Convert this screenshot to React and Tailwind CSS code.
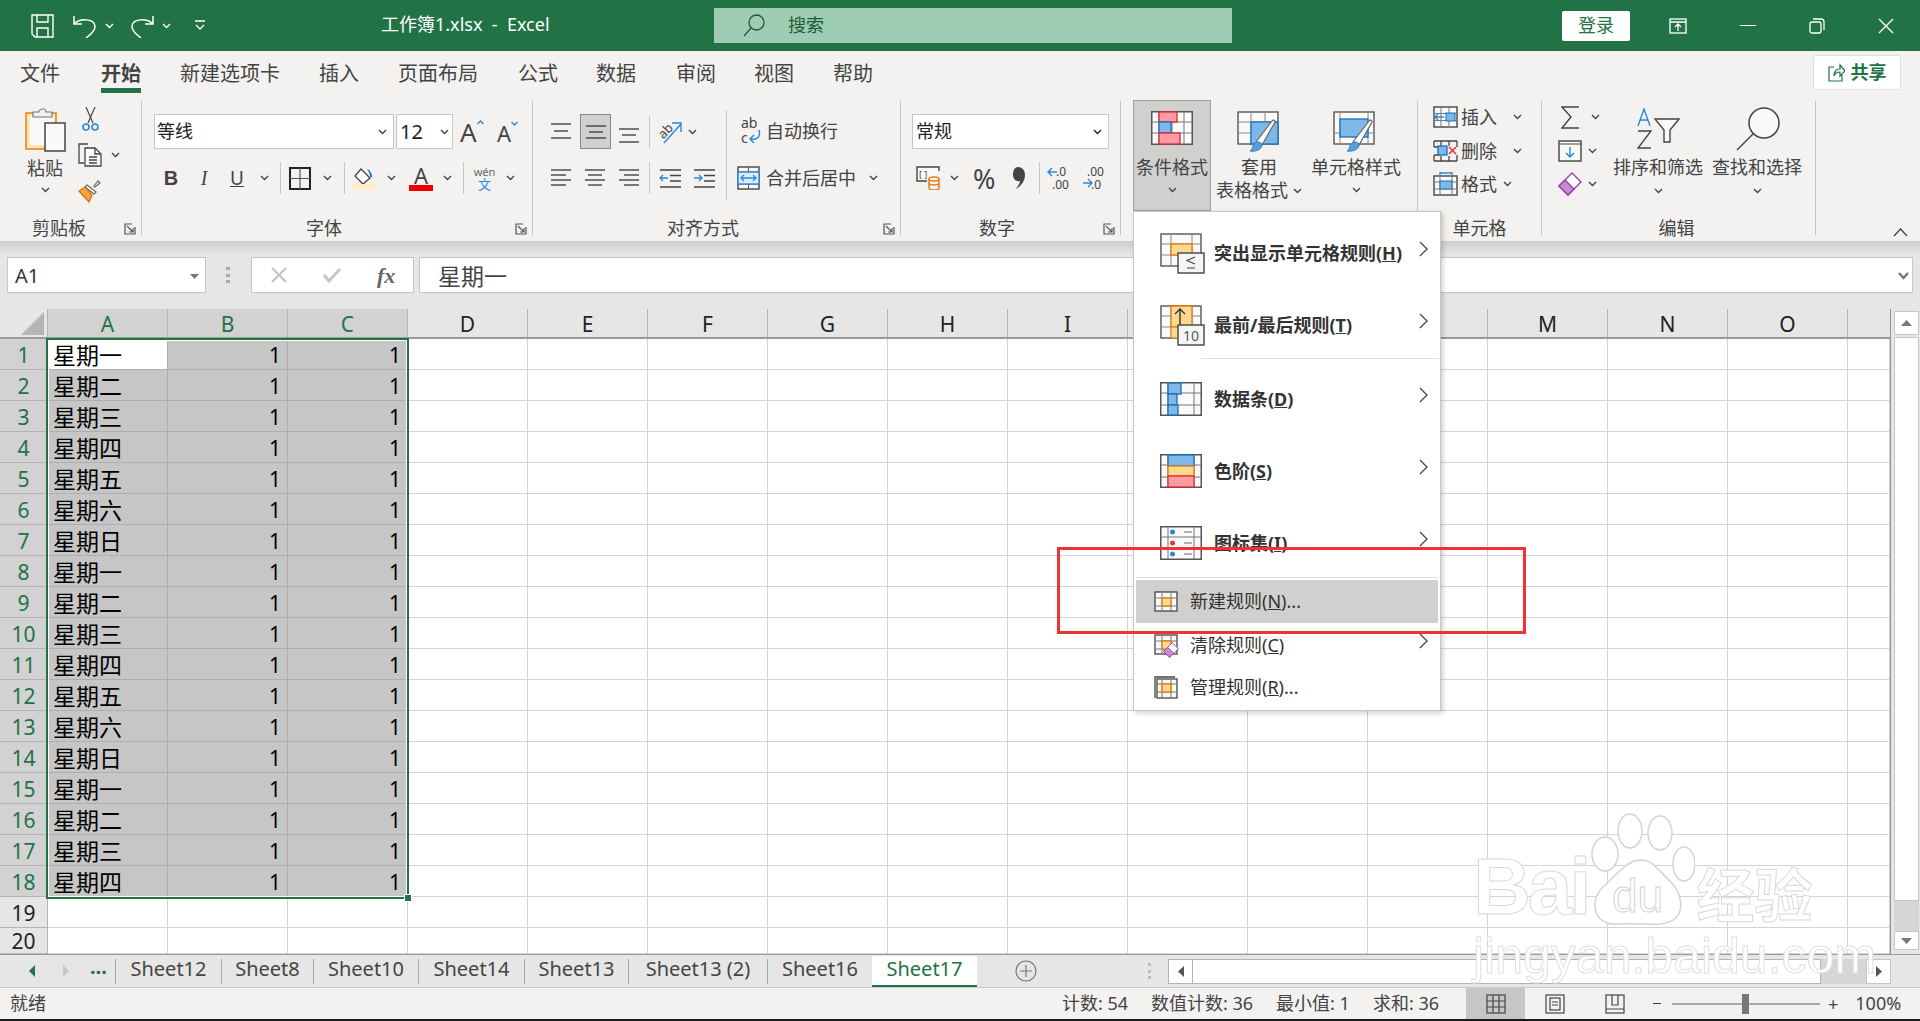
import React from "react";

const COLS = ["A", "B", "C", "D", "E", "F", "G", "H", "I", "J", "K", "L", "M", "N", "O", ""];
const DAYS = ["星期一", "星期二", "星期三", "星期四", "星期五", "星期六", "星期日", "星期一", "星期二", "星期三", "星期四", "星期五", "星期六", "星期日", "星期一", "星期二", "星期三", "星期四"];
const TABS = [
  { label: "文件", className: "ml-[20px]" },
  { label: "开始", className: "ml-[41px]", active: true },
  { label: "新建选项卡", className: "ml-[39px]" },
  { label: "插入", className: "ml-[39px]" },
  { label: "页面布局", className: "ml-[39px]" },
  { label: "公式", className: "ml-[40px]" },
  { label: "数据", className: "ml-[38px]" },
  { label: "审阅", className: "ml-[40px]" },
  { label: "视图", className: "ml-[38px]" },
  { label: "帮助", className: "ml-[39px]" },
];
const SHEETS = [
  { name: "Sheet12", className: "w-[106px]" },
  { name: "Sheet8", className: "w-[92px]" },
  { name: "Sheet10", className: "w-[105px]" },
  { name: "Sheet14", className: "w-[106px]" },
  { name: "Sheet13", className: "w-[104px]" },
  { name: "Sheet13 (2)", className: "w-[139px]" },
  { name: "Sheet16", className: "w-[105px]" },
];

function Chev({ className = "", color = "#444" }) {
  return (
    <svg className={`shrink-0 ${className}`} width="9" height="6" viewBox="0 0 9 6" fill="none">
      <path d="M1 1l3.5 3.5L8 1" stroke={color} strokeWidth="1.4" />
    </svg>
  );
}

function Launcher({ className = "" }) {
  return (
    <svg className={className} width="12" height="12" viewBox="0 0 12 12" fill="none" stroke="#555" strokeWidth="1.2">
      <path d="M11 4V11H1V1h7" />
      <path d="M3 3l6 6M9 5v4H5" />
    </svg>
  );
}

function VDiv({ className = "h-[32px]" }) {
  return <div className={`w-px bg-[#c8c6c4] shrink-0 ${className}`} />;
}

function Lines({ w = 21, rows, color = "#444" }) {
  return (
    <svg width={w} height="22" viewBox={`0 0 ${w} 22`} stroke={color} strokeWidth="1.4" fill="none">
      {rows.map(([x1, x2, y], i) => <path key={i} d={`M${x1} ${y}H${x2}`} />)}
    </svg>
  );
}

function Brush({ x = 0, y = 0 }) {
  return (
    <g transform={`translate(${x} ${y})`}>
      <path d="M8 24L24 3c1-1.500 3-1 3 1L14 27z" fill="#fff" stroke="#666" strokeWidth="1.2" />
      <path d="M2 33c3-1 2-6 5-8 3-2 7-1 7 2 0 4-6 7-12 6z" fill="#5a9fd8" stroke="#2f7fc1" strokeWidth="1" />
    </g>
  );
}

function MiniGrid({ w = 44, h = 34, xs = [], ys = [], children }) {
  return (
    <svg width={w} height={h} viewBox={`0 0 ${w} ${h}`} className="shrink-0">
      <rect x="0.75" y="0.75" width={w - 1.5} height={h - 1.5} fill="#fafafa" stroke="#555" strokeWidth="1.5" />
      {xs.map((x) => <path key={x} d={`M${x} 1V${h - 1}`} stroke="#777" strokeWidth="1" />)}
      {ys.map((y) => <path key={y} d={`M1 ${y}H${w - 1}`} stroke="#777" strokeWidth="1" />)}
      {children}
    </svg>
  );
}

function PasteIcon() {
  return (
    <svg width="41" height="45" viewBox="0 0 41 45">
      <rect x="1" y="6" width="30" height="36" fill="#fde6b3" stroke="#e08a1e" strokeWidth="1.6" />
      <rect x="5" y="9" width="24" height="29" fill="#f8f8f8" />
      <path d="M8 10V5h6c0-4 7-4 7 0h6v5z" fill="#f2f2f2" stroke="#777" strokeWidth="1.2" />
      <rect x="20" y="16" width="20" height="28" fill="#fafafa" stroke="#444" strokeWidth="1.5" />
    </svg>
  );
}

function CutIcon() {
  return (
    <svg width="17" height="24" viewBox="0 0 17 24" fill="none">
      <path d="M4 0l7 16M13 0L6 16" stroke="#444" strokeWidth="1.2" />
      <circle cx="4" cy="20" r="3" stroke="#2b88d8" strokeWidth="1.6" />
      <circle cx="13" cy="20" r="3" stroke="#2b88d8" strokeWidth="1.6" />
    </svg>
  );
}

function CopyIcon() {
  return (
    <svg width="24" height="24" viewBox="0 0 24 24" fill="none" stroke="#444" strokeWidth="1.3">
      <path d="M10 1H1v19h5" />
      <path d="M7 5h10l6 6v12H7z" fill="#fafafa" />
      <path d="M17 5v6h6M11 14h8M11 17h8M11 20h8" />
    </svg>
  );
}

function PainterIcon() {
  return (
    <svg width="24" height="24" viewBox="0 0 24 24">
      <path d="M16 7l4-5 2 2-5 4z" fill="#fff" stroke="#666" strokeWidth="1.2" />
      <path d="M9 6l9 7-2 2-9-7z" fill="#fff" stroke="#666" strokeWidth="1.2" />
      <path d="M7 8l7 8-3 7L1 12z" fill="#f4a340" stroke="#d9730d" strokeWidth="1.3" />
    </svg>
  );
}

function BorderIcon() {
  return (
    <svg width="22" height="23" viewBox="0 0 22 23" fill="none">
      <rect x="1" y="1" width="20" height="21" stroke="#222" strokeWidth="2" />
      <path d="M11 1v21M1 11.500h20" stroke="#555" strokeWidth="1.2" />
    </svg>
  );
}

function FillIcon() {
  return (
    <svg width="24" height="24" viewBox="0 0 24 24">
      <path d="M9 3l9 9-7 6-8-8z" fill="#fff" stroke="#444" strokeWidth="1.3" />
      <path d="M15 3c3 1 5 4 5 8-1 1-2 0-2-1 0-3-2-5-3-7z" fill="#1b6ec2" />
      <rect y="18" width="24" height="6" fill="#ffeec6" />
    </svg>
  );
}

function WrapIcon() {
  return (
    <svg width="20" height="32" viewBox="0 0 20 32" fill="none">
      <text x="0" y="12" fontSize="14" fill="#444">ab</text>
      <text x="0" y="27" fontSize="14" fill="#444">c</text>
      <path d="M18 14c2 7-2 10-8 9M13 19l-4 4 4 4" stroke="#2b88d8" strokeWidth="1.5" />
    </svg>
  );
}

function MergeIcon() {
  return (
    <svg width="23" height="24" viewBox="0 0 23 24" fill="none">
      <rect x="1" y="1" width="21" height="22" fill="#fafafa" stroke="#444" strokeWidth="1.4" />
      <path d="M1 6h21M1 18h21M11.500 1v5M11.500 18v5" stroke="#555" />
      <rect x="1" y="6" width="21" height="12" fill="#dcecf9" stroke="#2b88d8" strokeWidth="1.4" />
      <path d="M4 12h15M7 9l-3 3 3 3M16 9l3 3-3 3" stroke="#2b88d8" strokeWidth="1.3" />
    </svg>
  );
}

function OrientIcon() {
  return (
    <svg width="25" height="26" viewBox="0 0 25 26" fill="none">
      <text x="0" y="16" fontSize="13" fill="#444" transform="rotate(-45 8 12)">ab</text>
      <path d="M6 24L23 5M14 4h9v9" stroke="#2b88d8" strokeWidth="1.4" />
    </svg>
  );
}

function IndentIcon({ flip }) {
  return (
    <svg width="22" height="22" viewBox="0 0 22 22" fill="none">
      <path d="M1 3h21M11 8.500h11M11 14h11M1 20h21" stroke="#444" strokeWidth="1.4" />
      {flip ? <path d="M1 11h8M6 8l3 3-3 3" stroke="#2b88d8" strokeWidth="1.4" /> : <path d="M1 11h8M4 8l-3 3 3 3" stroke="#2b88d8" strokeWidth="1.4" />}
    </svg>
  );
}

function CurrencyIcon() {
  return (
    <svg width="24" height="24" viewBox="0 0 24 24" fill="none">
      <path d="M23 5V1H1v14h10" fill="#fafafa" stroke="#444" strokeWidth="1.4" />
      <text x="3" y="12" fontSize="9" fill="#444">[ ]</text>
      <ellipse cx="18" cy="13" rx="5" ry="2" stroke="#e07a10" strokeWidth="1.4" />
      <path d="M13 13v9c0 2.600 10 2.600 10 0v-9M13 17c0 2.600 10 2.600 10 0" stroke="#e07a10" strokeWidth="1.4" />
    </svg>
  );
}

function DecimalIcon({ inc }) {
  return (
    <svg width="23" height="26" viewBox="0 0 23 26" fill="none">
      <text x={inc ? 9 : 5} y="11" fontSize="12" fill="#444">{inc ? ".0" : ".00"}</text>
      <text x={inc ? 5 : 9} y="24" fontSize="12" fill="#444">{inc ? ".00" : ".0"}</text>
      {inc ? <path d="M10 7H1M5 3L1 7l4 4" stroke="#2b88d8" strokeWidth="1.4" /> : <path d="M1 18h9M6 14l4 4-4 4" stroke="#2b88d8" strokeWidth="1.4" />}
    </svg>
  );
}

function InsertIcon() {
  return (
    <svg width="25" height="22" viewBox="0 0 25 22" fill="none">
      <rect x="1" y="1" width="23" height="20" fill="#fafafa" stroke="#444" strokeWidth="1.4" />
      <path d="M8 1v20M16 1v20M1 7.500h23M1 14.500h23" stroke="#777" />
      <rect x="13" y="7" width="9" height="8" fill="#7fb8e8" stroke="#1a6fb8" />
      <path d="M11 11H2M5 8l-3 3 3 3" stroke="#2b88d8" strokeWidth="1.4" />
    </svg>
  );
}

function DeleteIcon() {
  return (
    <svg width="25" height="22" viewBox="0 0 25 22" fill="none">
      <path d="M1 1h23M1 21h23M1 1v6M1 15v6M24 1v6M24 15v6M8 1v5M16 1v5M8 16v5M16 16v5M1 7h6M1 15h6" stroke="#444" strokeWidth="1.3" />
      <rect x="5" y="6" width="9" height="9" fill="#7fb8e8" stroke="#1a6fb8" strokeWidth="1.3" />
      <path d="M16 7l7 7M23 7l-7 7" stroke="#e63a3a" strokeWidth="1.6" />
    </svg>
  );
}

function FormatIcon() {
  return (
    <svg width="25" height="24" viewBox="0 0 25 24" fill="none">
      <path d="M7 1h12M7 0v3M19 0v3" stroke="#2b88d8" strokeWidth="1.3" />
      <rect x="1" y="4" width="23" height="19" fill="#fafafa" stroke="#444" strokeWidth="1.4" />
      <path d="M7 4v19M19 4v19M1 10h23M1 17h23" stroke="#777" />
      <rect x="7" y="9" width="12" height="8" fill="#7fb8e8" stroke="#1a6fb8" />
    </svg>
  );
}

function FillDownIcon() {
  return (
    <svg width="24" height="22" viewBox="0 0 24 22" fill="none">
      <rect x="1" y="1" width="22" height="20" fill="#fafafa" stroke="#444" strokeWidth="1.4" />
      <path d="M1 4h22" stroke="#444" />
      <path d="M12 7v10M8 13l4 4 4-4" stroke="#2b88d8" strokeWidth="1.4" />
    </svg>
  );
}

function EraserIcon({ size = 24 }) {
  return (
    <svg width={size} height={size} viewBox="0 0 24 24">
      <path d="M14 1l9 9-13 13-9-9z" fill="#fff" stroke="#9a3ea5" strokeWidth="1.4" />
      <path d="M7 8l9 9-6 6-9-9z" fill="#c98ad0" stroke="#9a3ea5" strokeWidth="1.4" />
    </svg>
  );
}

function SortIcon() {
  return (
    <svg width="43" height="41" viewBox="0 0 43 41" fill="none">
      <path d="M1 18L7 1l6 17M3 12h8" stroke="#2b88d8" strokeWidth="1.4" />
      <path d="M1 23h13L1 40h13" stroke="#444" strokeWidth="1.4" />
      <path d="M18 11h24l-9 11v12h-6V22z" fill="#fafafa" stroke="#444" strokeWidth="1.4" />
    </svg>
  );
}

function FindIcon() {
  return (
    <svg width="45" height="44" viewBox="0 0 45 44" fill="none">
      <circle cx="29" cy="16" r="15" fill="#fafafa" stroke="#444" strokeWidth="1.5" />
      <path d="M18 27L2 43" stroke="#444" strokeWidth="1.5" />
    </svg>
  );
}

function GridRow({ label, selected, active, day, value, height = "h-[31px]" }) {
  return (
    <div className={`flex ${height} shrink-0`}>
      <div className={`w-[48px] shrink-0 flex items-center justify-center pt-[3px] border-r border-b border-[#b4b4b4] text-[21px] ${selected ? "bg-[#d2d2d2] text-[#217346]" : "bg-[#e6e6e6] text-[#222]"}`}>
        {label}
      </div>
      {COLS.map((col, i) => {
        const inSel = selected && i < 3;
        const bg = inSel ? (active && i === 0 ? "bg-white" : "bg-[#c6c6c6]") : "bg-white";
        const border = inSel ? "border-[#aeaeae]" : "border-[#d4d4d4]";
        const width = i === 15 ? "w-[42px]" : "w-[120px]";
        return (
          <div key={i} className={`${width} shrink-0 border-r border-b ${bg} ${border} flex items-center pt-[3px] text-black overflow-hidden ${i === 0 ? "pl-[5px] text-[23px]" : "justify-end pr-[6px] text-[21px]"}`}>
            {inSel ? (i === 0 ? day : value) : ""}
          </div>
        );
      })}
    </div>
  );
}

function MenuIconOne() {
  return (
    <svg width="45" height="41" viewBox="0 0 45 41">
      <rect x="1" y="1" width="40" height="32" fill="#fafafa" stroke="#555" strokeWidth="1.4" />
      <path d="M11 1v32M32 1v32M1 11h40M1 22h40" stroke="#888" />
      <rect x="11" y="11" width="21" height="11" fill="#fbd98f" stroke="#e07a10" strokeWidth="1.3" />
      <rect x="18" y="20" width="26" height="20" fill="#f5f5f5" stroke="#444" strokeWidth="1.4" />
      <path d="M35 24l-8 3.500 8 3.500M27 35h8" stroke="#444" strokeWidth="1.2" fill="none" />
    </svg>
  );
}

function MenuIconTwo() {
  return (
    <svg width="45" height="41" viewBox="0 0 45 41">
      <rect x="1" y="1" width="40" height="32" fill="#fafafa" stroke="#555" strokeWidth="1.4" />
      <path d="M11 1v32M32 1v32M1 11h40M1 22h40" stroke="#888" />
      <path d="M11 1h21v21H11z" fill="#fbd98f" stroke="#e07a10" strokeWidth="1.3" />
      <path d="M11 22h8v11h-8z" fill="#fbd98f" stroke="#e07a10" />
      <path d="M20 20V4M15 9l5-5 5 5" stroke="#333" strokeWidth="1.4" fill="none" />
      <rect x="18" y="20" width="26" height="20" fill="#f5f5f5" stroke="#444" strokeWidth="1.4" />
      <text x="23" y="36" fontSize="14" fill="#555">10</text>
    </svg>
  );
}

function SmallRuleIcon({ manage }) {
  return (
    <svg width="24" height="23" viewBox="0 0 24 23">
      {manage && <path d="M1 22V1h20" fill="none" stroke="#444" strokeWidth="1.3" />}
      <rect x={manage ? 3 : 1} y={manage ? 3 : 2} width={manage ? 20 : 22} height={manage ? 19 : 19} fill="#fafafa" stroke="#444" strokeWidth="1.3" />
      <path d="M8 3v19M17 3v19M2 8h21M2 16h21" stroke="#777" />
      <rect x="8" y="8" width="9" height="8" fill="#fbd98f" stroke="#e07a10" strokeWidth="1.3" />
    </svg>
  );
}

function MenuItem({ icon, label, hot, tail = "", height, bold, arrow, className = "", highlight }) {
  return (
    <div className={`flex items-center shrink-0 ${height} ${className} ${highlight ? "mx-[2px] bg-[#d2d0ce]" : ""}`}>
      <div className={`shrink-0 flex items-center ${bold ? "ml-[26px] w-[54px]" : highlight ? "ml-[18px] w-[36px]" : "ml-[20px] w-[36px]"}`}>{icon}</div>
      <span className={`whitespace-nowrap text-[#333] ${bold ? "text-[18px] font-bold" : "text-[18px]"}`}>
        {label}(<span className="underline">{hot}</span>){tail}
      </span>
      {arrow && (
        <svg className="ml-auto mr-[12px] mb-[8px]" width="9" height="16" viewBox="0 0 9 16" fill="none">
          <path d="M1 1l7 7-7 7" stroke="#444" strokeWidth="1.3" />
        </svg>
      )}
    </div>
  );
}

export default function App() {
  return (
    <div className="relative w-[1920px] h-[1021px] overflow-hidden flex flex-col bg-[#e6e6e6] [font-family:'Noto_Sans','Noto_Sans_CJK_SC',sans-serif] text-[#444]">
      {/* title bar */}
      <div className="h-[51px] shrink-0 bg-[#217346] flex items-center text-white">
        <svg className="ml-[31px]" width="23" height="24" viewBox="0 0 23 24" fill="none" stroke="#fff" strokeWidth="1.4">
          <path d="M1 1h21v22H4l-3-3z" />
          <path d="M6 1v7h11V1M6 23v-9h11v9" />
        </svg>
        <svg className="ml-[19px]" width="23" height="24" viewBox="0 0 23 24" fill="none" stroke="#fff" strokeWidth="1.5">
          <path d="M1 2v8h8M1 10c6-6 21-6 21 3 0 4-5 8-9 11" />
        </svg>
        <Chev className="ml-[9px]" color="#fff" />
        <svg className="ml-[17px]" width="23" height="24" viewBox="0 0 23 24" fill="none" stroke="#fff" strokeWidth="1.5">
          <path d="M22 2v8h-8M22 10C16 4 1 4 1 13c0 4 5 8 9 11" />
        </svg>
        <Chev className="ml-[8px]" color="#fff" />
        <svg className="ml-[24px]" width="10" height="11" viewBox="0 0 10 11" fill="none" stroke="#fff" strokeWidth="1.3">
          <path d="M0 1h10M1 5l4 4 4-4" />
        </svg>
        <div className="ml-[176px] w-[333px] text-[18px] whitespace-nowrap pb-[2px]">工作簿1.xlsx&nbsp;&nbsp;-&nbsp;&nbsp;Excel</div>
        <div className="w-[518px] h-[35px] bg-[#9fcdb3] flex items-center text-[#1e5c3a] text-[18px]">
          <svg className="ml-[29px]" width="22" height="23" viewBox="0 0 22 23" fill="none" stroke="#1e5c3a" strokeWidth="1.3">
            <circle cx="13.500" cy="8.500" r="7.500" />
            <path d="M8 14L1 22" />
          </svg>
          <span className="ml-[23px]">搜索</span>
        </div>
        <div className="ml-[330px] w-[68px] h-[30px] bg-white rounded-[2px] flex items-center justify-center text-[#217346] text-[18px]">登录</div>
        <svg className="ml-[39px]" width="18" height="16" viewBox="0 0 18 16" fill="none" stroke="#fff" strokeWidth="1.3">
          <rect x="1" y="1" width="16" height="14" />
          <path d="M1 4h16M9 13V7M6 9l3-3 3 3" />
        </svg>
        <div className="ml-[53px] w-[16px] h-[1.500px] bg-white" />
        <svg className="ml-[53px]" width="16" height="16" viewBox="0 0 16 16" fill="none" stroke="#fff" strokeWidth="1.3">
          <rect x="1" y="4" width="11" height="11" rx="2" />
          <path d="M4 1h8c2 0 3 1 3 3v8" />
        </svg>
        <svg className="ml-[53px]" width="16" height="16" viewBox="0 0 16 16" fill="none" stroke="#fff" strokeWidth="1.4">
          <path d="M1 1l14 14M15 1L1 15" />
        </svg>
      </div>

      {/* ribbon tabs */}
      <div className="h-[49px] shrink-0 bg-[#f3f2f1] flex text-[20px]">
        {TABS.map((tab) => (
          <div key={tab.label} className={`${tab.className} flex flex-col items-center pt-[11px]`}>
            <span className={`h-[24px] leading-[24px] whitespace-nowrap ${tab.active ? "font-bold" : ""}`}>{tab.label}</span>
            {tab.active && <div className="mt-[2px] h-[5px] w-[40px] bg-[#217346]" />}
          </div>
        ))}
        <div className="ml-auto mr-[19px] mt-[4px] w-[88px] h-[35px] bg-white border border-[#e1dfdd] rounded-[2px] flex items-center justify-center text-[#217346] font-bold text-[18px] gap-[6px]">
          <svg width="17" height="19" viewBox="0 0 17 19" fill="none" stroke="#217346" strokeWidth="1.2">
            <path d="M6 4H1v14h13v-6M6 13c0-5 3-7 6-7V2l5 6-5 5V9c-3 0-5 1-6 4z" />
          </svg>
          共享
        </div>
      </div>

      {/* ribbon */}
      <div className="h-[141px] shrink-0 bg-[#f3f2f1] flex items-start text-[18px] pt-px">
        {/* clipboard */}
        <div className="w-[142px] h-[134px] shrink-0 border-r border-[#c8c6c4] flex flex-col">
          <div className="h-[113px] flex">
            <div className="ml-[22px] w-[46px] flex flex-col items-center pt-[6px]">
              <PasteIcon />
              <span className="h-[24px] leading-[24px] mt-[4px] whitespace-nowrap">粘贴</span>
              <Chev className="mt-[7px]" />
            </div>
            <div className="ml-[10px] flex flex-col pt-[6px]">
              <div className="ml-[4px]"><CutIcon /></div>
              <div className="mt-[12px] flex items-center"><CopyIcon /><Chev className="ml-[9px]" /></div>
              <div className="mt-[12px]"><PainterIcon /></div>
            </div>
          </div>
          <div className="flex items-center h-[21px] pt-[8px]">
            <span className="ml-[32px] whitespace-nowrap">剪贴板</span>
            <Launcher className="ml-auto mr-[5px]" />
          </div>
        </div>

        {/* font */}
        <div className="w-[391px] h-[134px] shrink-0 border-r border-[#c8c6c4] flex flex-col">
          <div className="h-[113px] pt-[13px]">
            <div className="flex items-center h-[35px]">
              <div className="ml-[12px] w-[240px] h-[35px] bg-white border border-[#c8c6c4] flex items-center px-[2px] text-[#222]">
                <span>等线</span>
                <Chev className="ml-auto mr-[4px]" />
              </div>
              <div className="ml-[2px] w-[57px] h-[35px] bg-white border border-[#c8c6c4] flex items-center pl-[3px] text-[#222] text-[20px]">
                <span>12</span>
                <Chev className="ml-auto mr-[3px]" />
              </div>
              <div className="ml-[7px] w-[24px] h-[28px] relative text-[26px] leading-[28px]">A
                <svg className="absolute right-0 top-[2px]" width="7" height="5" viewBox="0 0 7 5" fill="none"><path d="M.500 4l3-3 3 3" stroke="#2b88d8" strokeWidth="1.4" /></svg>
              </div>
              <div className="ml-[13px] w-[20px] h-[28px] relative text-[22px] leading-[30px]">A
                <svg className="absolute -right-[1px] top-[3px]" width="7" height="5" viewBox="0 0 7 5" fill="none"><path d="M.500 1l3 3 3-3" stroke="#2b88d8" strokeWidth="1.4" /></svg>
              </div>
            </div>
            <div className="flex items-center h-[36px] mt-[11px]">
              <span className="ml-[21px] w-[16px] text-center font-bold text-[20px] [font-family:'Liberation_Sans',sans-serif]">B</span>
              <span className="ml-[17px] w-[16px] text-center italic text-[20px] [font-family:'Liberation_Serif',serif]">I</span>
              <span className="ml-[17px] w-[16px] text-center underline text-[19px]">U</span>
              <Chev className="ml-[15px]" />
              <VDiv className="ml-[11px] h-[32px]" />
              <div className="ml-[8px]"><BorderIcon /></div>
              <Chev className="ml-[12px]" />
              <VDiv className="ml-[12px] h-[32px]" />
              <div className="ml-[7px]"><FillIcon /></div>
              <Chev className="ml-[11px]" />
              <div className="ml-[13px] w-[24px] h-[26px] flex flex-col items-center text-[22px] leading-[20px]">
                <span>A</span>
                <div className="w-[24px] h-[6px] bg-[#f00000]" />
              </div>
              <Chev className="ml-[10px]" />
              <VDiv className="ml-[11px] h-[32px]" />
              <div className="ml-[10px] w-[21px] flex flex-col items-center leading-[13px]">
                <span className="text-[11px] whitespace-nowrap text-[#666]">wén</span>
                <span className="text-[13px] text-[#2b88d8]">文</span>
              </div>
              <Chev className="ml-[11px]" />
            </div>
          </div>
          <div className="flex items-center h-[21px] pt-[8px]">
            <span className="ml-[164px] whitespace-nowrap">字体</span>
            <Launcher className="ml-auto mr-[5px]" />
          </div>
        </div>

        {/* alignment */}
        <div className="w-[368px] h-[134px] shrink-0 border-r border-[#c8c6c4] flex flex-col">
          <div className="h-[113px] flex">
            <div className="w-[193px] pt-[13px] shrink-0">
              <div className="flex items-center h-[35px]">
                <div className="ml-[17px] w-[21px] h-[22px]"><Lines rows={[[1, 21, 3], [4, 18, 10], [1, 21, 17]]} /></div>
                <div className="ml-[9px] w-[31px] h-[35px] bg-[#d2d0ce] border border-[#8a8886] flex items-center justify-center">
                  <Lines rows={[[1, 21, 5], [4, 18, 11], [1, 21, 17]]} />
                </div>
                <div className="ml-[7px] w-[22px] h-[22px]"><Lines rows={[[1, 21, 8], [4, 18, 14], [1, 21, 21]]} /></div>
                <VDiv className="ml-[9px] h-[32px]" />
                <div className="ml-[8px]"><OrientIcon /></div>
                <Chev className="ml-[5px]" />
              </div>
              <div className="flex items-center h-[36px] mt-[11px]">
                <div className="ml-[17px] w-[21px] h-[22px]"><Lines rows={[[1, 21, 3], [1, 16, 8], [1, 21, 13], [1, 16, 18]]} /></div>
                <div className="ml-[13px] w-[21px] h-[22px]"><Lines rows={[[1, 21, 3], [4, 18, 8], [1, 21, 13], [4, 18, 18]]} /></div>
                <div className="ml-[13px] w-[22px] h-[22px]"><Lines rows={[[1, 21, 3], [6, 21, 8], [1, 21, 13], [6, 21, 18]]} /></div>
                <VDiv className="ml-[9px] h-[32px]" />
                <div className="ml-[9px]"><IndentIcon /></div>
                <div className="ml-[12px]"><IndentIcon flip /></div>
              </div>
            </div>
            <VDiv className="mt-[9px] h-[90px]" />
            <div className="pt-[13px]">
              <div className="flex items-center h-[35px] whitespace-nowrap">
                <div className="ml-[14px]"><WrapIcon /></div>
                <span className="ml-[5px]">自动换行</span>
              </div>
              <div className="flex items-center h-[36px] mt-[11px] whitespace-nowrap">
                <div className="ml-[10px]"><MergeIcon /></div>
                <span className="ml-[6px]">合并后居中</span>
                <Chev className="ml-[13px]" />
              </div>
            </div>
          </div>
          <div className="flex items-center h-[21px] pt-[8px]">
            <span className="ml-[134px] whitespace-nowrap">对齐方式</span>
            <Launcher className="ml-auto mr-[5px]" />
          </div>
        </div>

        {/* number */}
        <div className="w-[220px] h-[134px] shrink-0 border-r border-[#c8c6c4] flex flex-col">
          <div className="h-[113px] pt-[13px]">
            <div className="ml-[11px] w-[197px] h-[35px] bg-white border border-[#c8c6c4] flex items-center px-[3px] text-[#222]">
              <span>常规</span>
              <Chev className="ml-auto mr-[3px]" color="#222" />
            </div>
            <div className="flex items-center h-[36px] mt-[11px]">
              <div className="ml-[15px]"><CurrencyIcon /></div>
              <Chev className="ml-[10px]" />
              <span className="ml-[14px] w-[22px] text-[27px] text-center leading-none">%</span>
              <svg className="ml-[18px] shrink-0" width="12" height="22" viewBox="0 0 12 22">
                <path d="M5 0c4 0 7 3 7 8 0 6-4 11-9 14 2-3 4-6 4-8-4 1-7-2-7-6 0-5 2-8 5-8z" fill="#444" />
              </svg>
              <VDiv className="ml-[14px] h-[32px]" />
              <div className="ml-[7px]"><DecimalIcon inc /></div>
              <div className="ml-[12px]"><DecimalIcon /></div>
            </div>
          </div>
          <div className="flex items-center h-[21px] pt-[8px]">
            <span className="ml-[78px] whitespace-nowrap">数字</span>
            <Launcher className="ml-auto mr-[5px]" />
          </div>
        </div>

        {/* styles */}
        <div className="w-[297px] h-[134px] shrink-0 border-r border-[#c8c6c4] flex items-start">
          <div className="ml-[12px] -mt-px w-[78px] h-[111px] bg-[#d2d0ce] border border-[#a19f9d] flex flex-col items-center pt-[10px] shrink-0">
            <MiniGrid w={42} h={34} xs={[8, 21, 33]} ys={[11, 22]}>
              <rect x="8" y="1" width="18" height="10" fill="#ff9aa2" stroke="#d62c2c" strokeWidth="1.3" />
              <rect x="8" y="11" width="12" height="11" fill="#7fb8e8" stroke="#1a6fb8" strokeWidth="1.3" />
              <rect x="8" y="22" width="21" height="11" fill="#ff9aa2" stroke="#d62c2c" strokeWidth="1.3" />
            </MiniGrid>
            <span className="h-[23px] leading-[23px] mt-[11px] whitespace-nowrap">条件格式</span>
            <Chev className="mt-[8px]" />
          </div>
          <div className="ml-[3px] w-[90px] flex flex-col items-center pt-[10px] shrink-0">
            <svg width="45" height="44" viewBox="0 0 45 44">
              <rect x="1" y="1" width="40" height="32" fill="#fafafa" stroke="#555" strokeWidth="1.4" />
              <path d="M14 1v32M28 1v32M1 11h40M1 22h40" stroke="#888" />
              <rect x="14" y="11" width="27" height="22" fill="#7fb8e8" stroke="#1a6fb8" strokeWidth="1.3" />
              <Brush x={11} y={7} />
            </svg>
            <span className="h-[23px] leading-[23px] mt-[1px] whitespace-nowrap">套用</span>
            <div className="flex items-center h-[23px] whitespace-nowrap">表格格式<Chev className="ml-[5px]" /></div>
          </div>
          <div className="-ml-[1px] w-[106px] flex flex-col items-center pt-[10px] shrink-0">
            <svg width="46" height="44" viewBox="0 0 46 44">
              <rect x="1" y="1" width="40" height="32" fill="#fafafa" stroke="#555" strokeWidth="1.4" />
              <path d="M7 1v32M35 1v32M1 22h40" stroke="#888" />
              <rect x="7" y="8" width="28" height="18" fill="#7fb8e8" stroke="#1a6fb8" strokeWidth="1.3" />
              <Brush x={12} y={7} />
            </svg>
            <span className="h-[23px] leading-[23px] mt-[1px] whitespace-nowrap">单元格样式</span>
            <Chev className="mt-[8px]" />
          </div>
        </div>

        {/* cells */}
        <div className="w-[124px] h-[134px] shrink-0 border-r border-[#c8c6c4] flex flex-col">
          <div className="h-[113px] pt-[4px] whitespace-nowrap">
            <div className="flex items-center h-[24px]">
              <div className="ml-[15px]"><InsertIcon /></div>
              <span className="ml-[3px] w-[36px]">插入</span>
              <Chev className="ml-[16px]" />
            </div>
            <div className="flex items-center h-[24px] mt-[10px]">
              <div className="ml-[15px]"><DeleteIcon /></div>
              <span className="ml-[3px] w-[36px]">删除</span>
              <Chev className="ml-[16px]" />
            </div>
            <div className="flex items-center h-[24px] mt-[9px]">
              <div className="ml-[15px]"><FormatIcon /></div>
              <span className="ml-[3px] w-[36px]">格式</span>
              <Chev className="ml-[6px]" />
            </div>
          </div>
          <div className="flex items-center justify-center h-[21px] pt-[8px]"><span>单元格</span></div>
        </div>

        {/* editing */}
        <div className="w-[274px] h-[134px] shrink-0 border-r border-[#c8c6c4] flex flex-col">
          <div className="h-[113px] flex">
            <div className="w-[59px] pt-[4px] shrink-0">
              <div className="flex items-center h-[24px]">
                <svg className="ml-[19px] shrink-0" width="19" height="23" viewBox="0 0 19 23" fill="none">
                  <path d="M18 1H1l9 10L1 22h17" stroke="#444" strokeWidth="1.4" />
                </svg>
                <Chev className="ml-[11px]" />
              </div>
              <div className="flex items-center h-[24px] mt-[10px]">
                <div className="ml-[16px]"><FillDownIcon /></div>
                <Chev className="ml-[6px]" />
              </div>
              <div className="flex items-center h-[24px] mt-[9px]">
                <div className="ml-[16px]"><EraserIcon /></div>
                <Chev className="ml-[6px]" />
              </div>
            </div>
            <div className="ml-[12px] w-[90px] flex flex-col items-center pt-[7px] shrink-0">
              <div className="h-[48px]"><SortIcon /></div>
              <span className="h-[23px] leading-[23px] whitespace-nowrap">排序和筛选</span>
              <Chev className="mt-[9px]" />
            </div>
            <div className="ml-[9px] w-[90px] flex flex-col items-center pt-[6px] shrink-0">
              <div className="h-[49px]"><FindIcon /></div>
              <span className="h-[23px] leading-[23px] whitespace-nowrap">查找和选择</span>
              <Chev className="mt-[9px]" />
            </div>
          </div>
          <div className="flex items-center justify-center h-[21px] pt-[8px]"><span className="-ml-[4px]">编辑</span></div>
        </div>

        <div className="flex-1 h-[139px] flex items-end justify-end pr-[12px] pb-[3px]">
          <svg width="15" height="9" viewBox="0 0 15 9" fill="none"><path d="M1 8l6.500-7L14 8" stroke="#444" strokeWidth="1.3" /></svg>
        </div>
      </div>

      {/* formula bar */}
      <div className="h-[68px] shrink-0 flex flex-col bg-[#e6e6e6]">
        <div className="h-[14px] bg-gradient-to-b from-[#cdcdcd] to-[#e6e6e6]" />
        <div className="mt-[2px] flex items-start pr-[7px]">
          <div className="ml-[7px] w-[199px] h-[36px] bg-white border border-[#c6c6c6] flex items-center pl-[7px] pt-[2px] text-[20px] text-[#333]">
            A1
            <svg className="ml-auto mr-[6px]" width="9" height="5" viewBox="0 0 9 5"><path d="M0 0h9L4.500 5z" fill="#777" /></svg>
          </div>
          <div className="ml-[20px] w-[4px] h-[16px] mt-[10px] flex flex-col justify-between">
            <div className="h-[3px] bg-[#aaa]" /><div className="h-[3px] bg-[#aaa]" /><div className="h-[3px] bg-[#aaa]" />
          </div>
          <div className="ml-[21px] w-[163px] h-[36px] bg-white border border-[#c6c6c6] flex items-center shrink-0">
            <svg className="ml-[19px]" width="16" height="16" viewBox="0 0 16 16" fill="none" stroke="#c6c6c6" strokeWidth="2.4"><path d="M1 1l14 14M15 1L1 15" /></svg>
            <svg className="ml-[36px]" width="18" height="16" viewBox="0 0 18 16" fill="none" stroke="#c6c6c6" strokeWidth="3"><path d="M1 8l5 6L17 2" /></svg>
            <span className="ml-[36px] italic text-[22px] text-[#666] font-bold [font-family:'Liberation_Serif',serif]">fx</span>
          </div>
          <div className="ml-[5px] flex-1 h-[36px] bg-white border border-[#c6c6c6] flex items-center pl-[18px] pt-[2px] text-[23px] text-[#444]">
            星期一
            <svg className="ml-auto mr-[3px]" width="11" height="8" viewBox="0 0 11 8" fill="none"><path d="M1 1l4.500 5L10 1" stroke="#777" strokeWidth="2.4" /></svg>
          </div>
        </div>
      </div>

      {/* sheet */}
      <div className="h-[645px] shrink-0 flex overflow-hidden">
        <div className="w-[1891px] shrink-0 flex flex-col border-r border-[#8f8f8f] bg-white">
          <div className="flex h-[30px] shrink-0 bg-[#e6e6e6] border-b-2 border-[#9a9a9a]">
            <div className="w-[48px] shrink-0 border-r border-[#b4b4b4] flex items-end justify-end pr-[3px] pb-[2px]">
              <svg width="23" height="23" viewBox="0 0 23 23"><path d="M23 0v23H0z" fill="#b5b5b5" /></svg>
            </div>
            {COLS.map((col, i) => (
              <div key={i} className={`${i === 15 ? "w-[42px]" : "w-[120px] border-r"} shrink-0 border-[#b4b4b4] flex items-center justify-center pt-[3px] text-[21px] ${i < 3 ? "bg-[#d2d2d2] text-[#217346]" : "text-[#222]"}`}>
                {col}
              </div>
            ))}
          </div>
          {DAYS.map((day, i) => (
            <GridRow key={i} label={i + 1} selected active={i === 0} day={day} value="1" />
          ))}
          <GridRow label={19} />
          <GridRow label={20} height="h-[26px]" />
        </div>
        <div className="flex-1 flex flex-col items-center pl-px">
          <div className="mt-[2px] w-[25px] h-[24px] bg-white border border-[#c6c6c6] flex items-center justify-center">
            <svg width="11" height="6" viewBox="0 0 11 6"><path d="M5.500 0L11 6H0z" fill="#777" /></svg>
          </div>
          <div className="mt-[2px] w-[25px] h-[564px] bg-white border border-[#c6c6c6]" />
          <div className="flex-1 w-[25px] bg-[#d6d6d6]" />
          <div className="w-[25px] h-[19px] bg-white border border-[#c6c6c6] flex items-center justify-center mb-[4px]">
            <svg width="11" height="6" viewBox="0 0 11 6"><path d="M0 0h11L5.500 6z" fill="#777" /></svg>
          </div>
        </div>
      </div>

      {/* sheet tabs */}
      <div className="h-[33px] shrink-0 bg-[#e6e6e6] border-t border-[#9a9a9a] flex items-center text-[20px]">
        <div className="w-[115px] shrink-0 flex items-center">
          <svg className="ml-[29px]" width="6" height="12" viewBox="0 0 6 12"><path d="M6 0v12L0 6z" fill="#217346" /></svg>
          <svg className="ml-[28px]" width="6" height="12" viewBox="0 0 6 12"><path d="M0 0v12l6-6z" fill="#c6c6c6" /></svg>
          <span className="ml-[21px] font-bold text-[#217346] leading-none pb-[8px]">...</span>
        </div>
        {SHEETS.map((s) => (
          <div key={s.name} className={`${s.className} h-[25px] shrink-0 border-l border-[#a8a8a8] flex items-center justify-center whitespace-nowrap pb-[4px]`}>
            {s.name}
          </div>
        ))}
        <div className="w-[105px] h-[32px] shrink-0 bg-white border-b-[3px] border-[#217346] text-[#217346] flex items-center justify-center -mb-px pb-[2px]">Sheet17</div>
        <svg className="ml-[38px]" width="22" height="22" viewBox="0 0 22 22" fill="none" stroke="#777" strokeWidth="1.2">
          <circle cx="11" cy="11" r="10" /><path d="M11 5v12M5 11h12" />
        </svg>
        <div className="ml-[111px] w-[3px] h-[16px] flex flex-col justify-between">
          <div className="h-[3px] bg-[#bbb]" /><div className="h-[3px] bg-[#bbb]" /><div className="h-[3px] bg-[#bbb]" />
        </div>
        <div className="ml-[17px] w-[723px] h-[25px] flex bg-[#d6d6d6]">
          <div className="w-[25px] bg-white border border-[#b4b4b4] flex items-center justify-center">
            <svg width="6" height="11" viewBox="0 0 6 11"><path d="M6 0v11L0 5.500z" fill="#555" /></svg>
          </div>
          <div className="w-[628px] bg-white border-y border-r border-[#b4b4b4]" />
          <div className="ml-auto w-[25px] bg-white border border-[#c6c6c6] flex items-center justify-center">
            <svg width="6" height="11" viewBox="0 0 6 11"><path d="M0 0v11l6-5.500z" fill="#555" /></svg>
          </div>
        </div>
      </div>

      {/* status bar */}
      <div className="h-[32px] shrink-0 bg-[#f3f2f1] border-t border-[#c8c8c8] flex items-center text-[18px] whitespace-nowrap">
        <span className="ml-[10px] w-[1052px]">就绪</span>
        <span className="w-[89px]">计数: 54</span>
        <span className="w-[125px]">数值计数: 36</span>
        <span className="w-[97px]">最小值: 1</span>
        <span className="w-[93px]">求和: 36</span>
        <div className="w-[59px] h-full bg-[#c8c6c4] flex items-center justify-center">
          <svg width="20" height="20" viewBox="0 0 20 20" fill="none" stroke="#444" strokeWidth="1.2">
            <rect x="1" y="1" width="18" height="18" /><path d="M7 1v18M13 1v18M1 7h18M1 13h18" />
          </svg>
        </div>
        <svg className="ml-[20px]" width="20" height="20" viewBox="0 0 20 20" fill="none" stroke="#444" strokeWidth="1.2">
          <rect x="1" y="1" width="18" height="18" /><rect x="5" y="4" width="10" height="12" /><path d="M7 8h6M7 11h6" />
        </svg>
        <svg className="ml-[40px]" width="20" height="20" viewBox="0 0 20 20" fill="none" stroke="#444" strokeWidth="1.2">
          <rect x="1" y="1" width="18" height="18" /><path d="M7 1v10h6V1M1 15h18" />
        </svg>
        <span className="ml-[28px] w-[8px] h-px bg-[#444]" />
        <div className="ml-[11px] w-[148px] h-[2px] bg-[#a8a8a8] flex items-center">
          <div className="ml-[70px] w-[7px] h-[20px] bg-[#777]" />
        </div>
        <span className="ml-[8px] text-[18px] leading-none">+</span>
        <span className="ml-[17px]">100%</span>
      </div>
      <div className="flex-1 bg-[#1a1a1a]" />

      {/* watermark */}
      <div className="absolute left-[1473px] top-[815px] w-[350px] h-[170px] pointer-events-none text-white [-webkit-text-stroke:1px_#d9d9d9]">
        <div className="flex items-end h-[112px]">
          <span className="text-[80px] leading-[80px] font-bold [font-family:'Liberation_Sans',sans-serif] tracking-[-3px]">Bai</span>
          <svg className="ml-[2px] shrink-0" width="104" height="114" viewBox="0 0 104 114" fill="#fff" stroke="#d4d4d4" strokeWidth="1.500">
            <ellipse cx="14" cy="41" rx="13" ry="17" />
            <ellipse cx="39" cy="18" rx="12" ry="17" />
            <ellipse cx="69" cy="20" rx="12" ry="17" />
            <ellipse cx="93" cy="51" rx="11" ry="17" />
            <path d="M50 47c12 0 18 11 30 22 12 12 18 40-12 42-9 1-28-1-42 0C2 113-2 87 12 74c13-11 23-27 38-27z" />
            <text x="21" y="99" fontSize="46" fill="#fff" stroke="#d4d4d4" strokeWidth="1" fontFamily="Liberation Sans">du</text>
          </svg>
          <span className="ml-[2px] text-[58px] leading-[64px] font-bold whitespace-nowrap">经验</span>
        </div>
        <div className="mt-[4px] text-[50px] leading-[50px] whitespace-nowrap [font-family:'Liberation_Sans',sans-serif] [-webkit-text-stroke:1px_#e0e0e0]">jingyan.baidu.com</div>
      </div>

      {/* conditional formatting menu */}
      <div className="absolute left-[1133px] top-[211px] w-[308px] h-[500px] bg-white border border-[#c8c6c4] shadow-[2px_2px_5px_rgba(0,0,0,0.2)] flex flex-col pt-[5px]">
        <MenuItem bold arrow height="h-[72px]" label="突出显示单元格规则" hot="H" icon={<MenuIconOne />} />
        <MenuItem bold arrow height="h-[69px]" className="pt-[3px]" label="最前/最后规则" hot="T" icon={<MenuIconTwo />} />
        <div className="ml-[67px] mr-[1px] h-px bg-[#e1dfdd] shrink-0" />
        <MenuItem bold arrow height="h-[80px]" label="数据条" hot="D" icon={
          <MiniGrid w={42} h={34} xs={[8, 34]} ys={[11, 23]}>
            <rect x="8" y="1" width="13" height="11" fill="#7fb8e8" stroke="#1a6fb8" strokeWidth="1.3" />
            <rect x="8" y="12" width="9" height="11" fill="#7fb8e8" stroke="#1a6fb8" strokeWidth="1.3" />
            <rect x="8" y="23" width="10" height="10" fill="#7fb8e8" stroke="#1a6fb8" strokeWidth="1.3" />
          </MiniGrid>
        } />
        <MenuItem bold arrow height="h-[64px]" label="色阶" hot="S" icon={
          <MiniGrid w={42} h={34} xs={[8, 34]} ys={[11, 23]}>
            <rect x="8" y="1" width="26" height="11" fill="#7fb8e8" stroke="#1a6fb8" strokeWidth="1.3" />
            <rect x="8" y="12" width="26" height="10" fill="#fbd98f" stroke="#e07a10" strokeWidth="1.3" />
            <rect x="8" y="22" width="26" height="11" fill="#ff9aa2" stroke="#d62c2c" strokeWidth="1.3" />
          </MiniGrid>
        } />
        <MenuItem bold arrow height="h-[74px]" className="pt-[6px]" label="图标集" hot="I" icon={
          <MiniGrid w={42} h={34} xs={[8, 34]} ys={[11, 23]}>
            <circle cx="12.500" cy="6" r="2.500" fill="#2b88d8" />
            <circle cx="12.500" cy="17" r="2.500" fill="#e63a3a" />
            <circle cx="12.500" cy="28" r="2.500" fill="#2b88d8" />
            <path d="M24 6h8M24 17h8M24 28h8" stroke="#666" />
          </MiniGrid>
        } />
        <div className="mx-[2px] h-px bg-[#e1dfdd] shrink-0" />
        <MenuItem highlight height="h-[43px] mt-[2px]" label="新建规则" hot="N" tail="..." icon={<SmallRuleIcon />} />
        <MenuItem arrow height="h-[42px] mt-px" label="清除规则" hot="C" icon={
          <div className="relative w-[24px] h-[24px]">
            <SmallRuleIcon />
            <div className="absolute left-[9px] top-[9px]"><EraserIcon size={16} /></div>
          </div>
        } />
        <MenuItem height="h-[43px]" label="管理规则" hot="R" tail="..." icon={<SmallRuleIcon manage />} />
      </div>

      {/* selection border */}
      <div className="absolute left-[46px] top-[338px] w-[363px] h-[561px] border-2 border-[#217346] shadow-[inset_0_0_0_1px_#fff] pointer-events-none">
        <div className="absolute -right-[4px] -bottom-[4px] w-[6px] h-[6px] bg-[#217346] outline outline-1 outline-white" />
      </div>

      {/* red callout */}
      <div className="absolute left-[1057px] top-[547px] w-[469px] h-[87px] border-[3px] border-[#ef3333] pointer-events-none" />
    </div>
  );
}
